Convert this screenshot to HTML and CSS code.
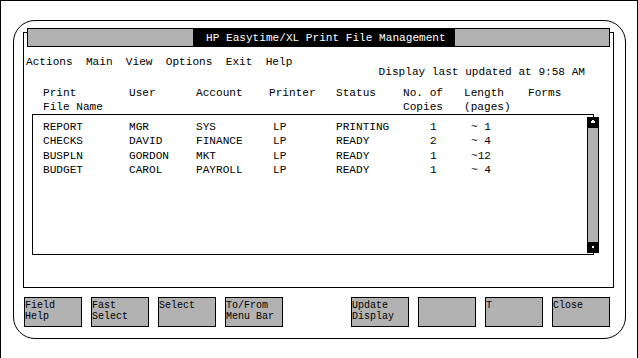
FILE: index.html
```
<!DOCTYPE html>
<html lang="en">
<head>
  <meta charset="UTF-8" />
  <title>HP Easytime/XL Print File Management</title>
  <link rel="stylesheet" href="styles.css">
</head>
<body>

<div class="screen">
  <div class="frame">

    <div class="window">
      <div class="titlebar"><span class="title">HP Easytime/XL Print File Management</span></div>

      <nav class="menu">Actions  Main  View  Options  Exit  Help</nav>
      <div class="updated">Display last updated at 9:58 AM</div>

      <!-- column headings -->
      <div class="cols head">
        <div>Print<br>File Name</div>
        <div>User</div>
        <div>Account</div>
        <div>Printer</div>
        <div>Status</div>
        <div>No. of<br>Copies</div>
        <div>Length<br>(pages)</div>
        <div>Forms</div>
      </div>

      <div class="listbox">
        <div class="rows">
          <div class="cols row">
            <div>REPORT</div><div>MGR</div><div>SYS</div><div class="c-printer">LP</div>
            <div>PRINTING</div><div class="c-copies">1</div><div class="c-length">~ 1</div><div></div>
          </div>
          <div class="cols row">
            <div>CHECKS</div><div>DAVID</div><div>FINANCE</div><div class="c-printer">LP</div>
            <div>READY</div><div class="c-copies">2</div><div class="c-length">~ 4</div><div></div>
          </div>
          <div class="cols row">
            <div>BUSPLN</div><div>GORDON</div><div>MKT</div><div class="c-printer">LP</div>
            <div>READY</div><div class="c-copies">1</div><div class="c-length">~12</div><div></div>
          </div>
          <div class="cols row">
            <div>BUDGET</div><div>CAROL</div><div>PAYROLL</div><div class="c-printer">LP</div>
            <div>READY</div><div class="c-copies">1</div><div class="c-length">~ 4</div><div></div>
          </div>
        </div>

        <div class="scrollbar">
          <div class="sb-btn">
            <svg width="12" height="11" viewBox="0 0 12 11"><path d="M5 3h2v1h1v2H4V4h1z" fill="#fff"/></svg>
          </div>
          <div class="sb-track"></div>
          <div class="sb-btn">
            <svg width="12" height="11" viewBox="0 0 12 11"><rect x="5" y="4" width="2" height="2" fill="#fff"/></svg>
          </div>
        </div>
      </div>
    </div>

    <!-- function keys -->
    <div class="keys">
      <div class="key-group">
        <div class="key">Field<br>Help</div>
        <div class="key">Fast<br>Select</div>
        <div class="key">Select</div>
        <div class="key">To/From<br>Menu Bar</div>
      </div>
      <div class="key-group">
        <div class="key">Update<br>Display</div>
        <div class="key"></div>
        <div class="key">T</div>
        <div class="key">Close</div>
      </div>
    </div>

  </div>
</div>

</body>
</html>
```

FILE: styles.css
```
* {
  box-sizing: border-box;
}

body {
  margin: 0;
  background: #fff;
  color: #000;
  font-family: 'Liberation Mono', 'DejaVu Sans Mono', monospace;
  font-size: 11.1px;
}

.screen {
  width: 638px;
  height: 358px;
  border: 1px solid #000;
  border-bottom: none;
  padding: 19px 11px 0 12px;
  overflow: hidden;
}

.frame {
  height: 319px;
  border: 1px solid #000;
  border-radius: 22px;
  padding: 11px 11px 0 9px;
}

.window {
  height: 256px;
  border: 1px solid #000;
}

/* title bar sits over the window's top edge */
.titlebar {
  display: flex;
  height: 19px;
  margin: -5px 3px 0 3px;
  border: 1px solid #000;
  background: #b2b2b2;
}

.title {
  width: 262px;
  margin-left: 165px;
  padding: 1px 0 0 13px;
  background: #000;
  color: #fff;
  line-height: 16px;
  white-space: pre;
}

.menu {
  margin-top: 11px;
  padding-left: 2px;
  line-height: 9px;
  white-space: pre;
}

.updated {
  padding-right: 28px;
  line-height: 10px;
  text-align: right;
}

.cols {
  display: grid;
  grid-template-columns: 86px 67px 73px 67px 67px 61px 64px 1fr;
  white-space: pre;
}

.head {
  margin-top: 9px;
  padding-left: 19px;
  line-height: 14px;
}

.listbox {
  display: flex;
  width: 562px;
  height: 141px;
  margin: 0 0 0 8px;
  border: 1px solid #000;
}

.rows {
  flex: 1;
  padding: 5px 0 0 10px;
}

.row {
  line-height: 14.4px;
}

.c-printer { padding-left: 4px; }
.c-copies { padding-left: 27px; }
.c-length { padding-left: 7px; }

.scrollbar {
  display: flex;
  flex-direction: column;
  width: 12px;
  margin: 2px -6px 1px 0;
}

.sb-btn {
  height: 11px;
  background: #000;
}

.sb-btn svg {
  display: block;
}

.sb-track {
  flex: 1;
  background: #b2b2b2;
  border-left: 1px solid #000;
  border-right: 1px solid #000;
}

.keys {
  display: flex;
  gap: 68px;
  margin: 9px 0 0 1px;
}

.key-group {
  display: flex;
  gap: 9px;
}

.key {
  width: 58px;
  height: 30px;
  padding-top: 2px;
  border: 1px solid #000;
  background: #b2b2b2;
  font-size: 10px;
  line-height: 11px;
}
```
